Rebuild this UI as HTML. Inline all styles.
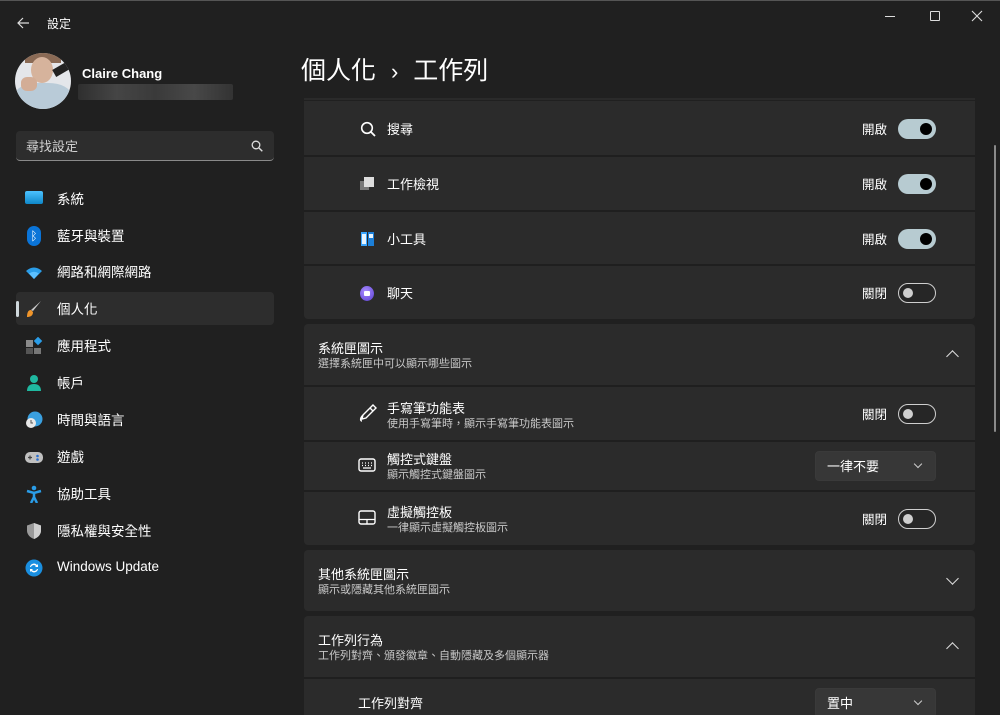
<!DOCTYPE html>
<html><head><meta charset="utf-8">
<style>
*{margin:0;padding:0;box-sizing:border-box}
html,body{width:1000px;height:715px;overflow:hidden}
body{background:#202020;font-family:"Liberation Sans","Noto Sans CJK TC",sans-serif;color:#fff;position:relative}
.a{position:absolute}
.t{font-size:13px;color:#fff;white-space:nowrap}
.s{font-size:11px;color:#c8c8c8;white-space:nowrap}
.nav{position:absolute;left:57px;font-size:13.5px;color:#fff}
.ic{position:absolute;left:25px;width:18px;height:18px}
.card{position:absolute;left:304px;width:671px;background:#2b2b2b;border-radius:4px}
.sep{position:absolute;left:304px;width:671px;height:2px;background:#1f1f1f}
.tg{position:absolute;left:898px;width:38px;height:20px;border-radius:10px}
.on{background:#b7cbd1}
.on::after{content:"";position:absolute;right:4px;top:4px;width:12px;height:12px;border-radius:50%;background:#000}
.off{border:1px solid #cfcfcf;background:#262626}
.off::after{content:"";position:absolute;left:4px;top:4px;width:10px;height:10px;border-radius:50%;background:#cfcfcf}
.lbl{position:absolute;left:862px;font-size:12.5px}
.dd{position:absolute;left:815px;width:121px;height:30px;background:#373737;border-radius:4px;border:1px solid #3a3a3a}
.dd span{position:absolute;left:11px;top:4px;font-size:13px}
.dd i{position:absolute;right:14px;top:9px;width:6px;height:6px;border-right:1.3px solid #ccc;border-bottom:1.3px solid #ccc;transform:rotate(45deg)}
.chev{position:absolute;left:948px;width:9px;height:9px;border-left:1.6px solid #ddd;border-top:1.6px solid #ddd}
</style></head><body>
<div class="a" style="left:0;top:0;width:1000px;height:1px;background:#555"></div>
<svg class="a" style="left:16px;top:16px" width="14" height="14" viewBox="0 0 14 14"><path d="M13 7H2M7 2L2 7l5 5" stroke="#ddd" stroke-width="1.2" fill="none"/></svg>
<div class="a" style="left:47px;top:15px;font-size:12px">設定</div>
<div class="a" style="left:885px;top:16px;width:10px;height:1px;background:#ddd"></div>
<div class="a" style="left:930px;top:11px;width:10px;height:10px;border:1.2px solid #ddd;border-radius:1px"></div>
<svg class="a" style="left:971px;top:10px" width="12" height="12"><path d="M1 1L11 11M11 1L1 11" stroke="#ddd" stroke-width="1.1"/></svg>
<!-- profile -->
<div class="a" style="left:15px;top:53px;width:56px;height:56px;border-radius:50%;background:#e4e6ea;overflow:hidden">
<div class="a" style="left:10px;top:0;width:36px;height:10px;background:#8a6a55"></div>
<div class="a" style="left:16px;top:4px;width:22px;height:26px;border-radius:50%;background:#d6b39c"></div>
<div class="a" style="left:0;top:30px;width:56px;height:30px;border-radius:40% 40% 0 0;background:#b9cbd8"></div>
<div class="a" style="left:6px;top:24px;width:16px;height:14px;border-radius:40%;background:#d3ad96"></div>
<div class="a" style="left:38px;top:12px;width:18px;height:8px;background:#222;transform:rotate(-30deg)"></div>
</div>
<div class="a" style="left:82px;top:66px;font-size:13px;font-weight:bold">Claire Chang</div>
<div class="a" style="left:78px;top:84px;width:155px;height:16px;background:linear-gradient(90deg,#2f2f2f,#454545,#3a3a3a,#484848,#333);border-radius:2px"></div>
<!-- search -->
<div class="a" style="left:16px;top:131px;width:258px;height:30px;background:#2d2d2d;border-radius:4px;border-bottom:1px solid #8a8a8a"></div>
<div class="a" style="left:26px;top:136px;font-size:13px;color:#d0d0d0">尋找設定</div>
<svg class="a" style="left:251px;top:140px" width="12" height="12"><circle cx="5" cy="5" r="3.8" stroke="#ddd" stroke-width="1.3" fill="none"/><path d="M8 8l3.3 3.3" stroke="#ddd" stroke-width="1.4"/></svg>
<!-- nav -->
<div class="a" style="left:16px;top:292px;width:258px;height:33px;background:#2d2d2d;border-radius:4px"></div>
<div class="a" style="left:16px;top:301px;width:3px;height:16px;background:#cfd8dc;border-radius:2px"></div>
<div class="ic" style="top:191px;height:13px;background:linear-gradient(#4cc2ff,#0f88c9);border-radius:2px"></div>
<div class="ic" style="top:226px;left:27px;width:14px;height:20px;background:#0a74d8;border-radius:7px;color:#fff;font-size:12px;text-align:center;line-height:20px">ᛒ</div>
<svg class="ic" style="top:264px" viewBox="0 0 18 18"><path d="M1 7Q9 0 17 7L9 15Z" fill="#2a9de8"/><path d="M4 9.5Q9 6 14 9.5L9 15Z" fill="#5cc0ff"/></svg>
<svg class="ic" style="top:300px" viewBox="0 0 18 18"><path d="M16 1L8 11l-2-1z" fill="#c9c9c9"/><path d="M6 10c-3 0-4 3-4 7 3 0 6-1 6-5z" fill="#f0952a"/></svg>
<svg class="ic" style="top:337px" viewBox="0 0 18 18"><rect x="1" y="3" width="7" height="7" fill="#8a8a8a"/><rect x="1" y="11" width="7" height="6" fill="#555"/><rect x="9" y="11" width="7" height="6" fill="#777"/><rect x="10" y="1" width="6" height="6" fill="#2a9de8" transform="rotate(45 13 4)"/></svg>
<svg class="ic" style="top:374px" viewBox="0 0 18 18"><circle cx="9" cy="5" r="4" fill="#1fb8a0"/><path d="M2 17c0-5 3-7 7-7s7 2 7 7z" fill="#1fb8a0"/></svg>
<svg class="ic" style="top:411px" viewBox="0 0 18 18"><circle cx="10" cy="8" r="7.5" fill="#3aa0e0"/><circle cx="6" cy="12" r="5" fill="#e8e8e8"/><path d="M6 9v3h2" stroke="#555" fill="none"/></svg>
<svg class="ic" style="top:449px" viewBox="0 0 18 18"><rect x="0" y="3" width="18" height="11" rx="5" fill="#c0c0c0"/><circle cx="12.5" cy="7" r="1.3" fill="#2a6fd0"/><circle cx="12.5" cy="10.5" r="1.3" fill="#2a6fd0"/><path d="M3 8.5h4M5 6.5v4" stroke="#444" stroke-width="1.2"/></svg>
<svg class="ic" style="top:485px" viewBox="0 0 18 18"><circle cx="9" cy="3" r="2.3" fill="#2a9de8"/><path d="M2 6l7 2 7-2M9 8v4l-3 6M9 12l3 6" stroke="#2a9de8" stroke-width="2.5" fill="none"/></svg>
<svg class="ic" style="top:522px" viewBox="0 0 18 18"><path d="M9 1L2 3.5v5c0 4 3 7 7 8.5 4-1.5 7-4.5 7-8.5v-5z" fill="#9a9a9a"/><path d="M9 1v16c4-1.5 7-4.5 7-8.5v-5z" fill="#cfcfcf"/></svg>
<svg class="ic" style="top:559px" viewBox="0 0 18 18"><circle cx="9" cy="9" r="8.5" fill="#1a8fe0"/><path d="M5 8a4 4 0 0 1 7-2l1-1v3h-3l1-1a3 3 0 0 0-5 1M13 10a4 4 0 0 1-7 2l-1 1v-3h3l-1 1a3 3 0 0 0 5-1" fill="#fff"/></svg>
<div class="nav" style="top:188px">系統</div>
<div class="nav" style="top:225px">藍牙與裝置</div>
<div class="nav" style="top:261px">網路和網際網路</div>
<div class="nav" style="top:298px">個人化</div>
<div class="nav" style="top:335px">應用程式</div>
<div class="nav" style="top:372px">帳戶</div>
<div class="nav" style="top:409px">時間與語言</div>
<div class="nav" style="top:446px">遊戲</div>
<div class="nav" style="top:483px">協助工具</div>
<div class="nav" style="top:520px">隱私權與安全性</div>
<div class="nav" style="top:559px">Windows Update</div>
<!-- header -->
<div class="a" style="left:301px;top:51px;font-size:25px;color:#fff">個人化 <span style="font-size:22px;padding:0 8px">›</span> 工作列</div>
<div class="a" style="left:304px;top:98px;width:671px;height:2px;background:#2a2a2a"></div>
<div class="a" style="left:994px;top:145px;width:2px;height:287px;background:#8a8a8a;border-radius:1px"></div>
<!-- card 1 -->
<div class="card" style="top:101px;height:218px;border-radius:0 0 4px 4px"></div>
<div class="sep" style="top:155px"></div>
<div class="sep" style="top:210px"></div>
<div class="sep" style="top:264px"></div>
<svg class="a" style="left:360px;top:121px" width="16" height="16"><circle cx="7" cy="7" r="5.3" stroke="#fff" stroke-width="1.6" fill="none"/><path d="M11 11l4 4" stroke="#fff" stroke-width="1.8"/></svg>
<div class="a" style="left:360px;top:177px;width:14px;height:14px"><div class="a" style="left:0;top:4px;width:9px;height:9px;background:#777"></div><div class="a" style="left:4px;top:0;width:10px;height:10px;background:#ddd"></div></div>
<div class="a" style="left:361px;top:232px;width:13px;height:14px"><div class="a" style="left:0;top:0;width:6px;height:14px;background:#3aa6ff"></div><div class="a" style="left:7px;top:0;width:6px;height:14px;background:#1c7fd8"></div><div class="a" style="left:1px;top:2px;width:4px;height:10px;background:#e6f4ff"></div><div class="a" style="left:8px;top:2px;width:4px;height:4px;background:#e6f4ff"></div></div>
<div class="a" style="left:360px;top:286px;width:14px;height:15px;border-radius:50%;background:radial-gradient(circle at 40% 35%,#a88bff,#5a3fd0)"><div class="a" style="left:4px;top:5px;width:6px;height:5px;background:#fff;border-radius:1px"></div></div>
<div class="t a" style="left:387px;top:119px">搜尋</div>
<div class="t a" style="left:387px;top:174px">工作檢視</div>
<div class="t a" style="left:387px;top:229px">小工具</div>
<div class="t a" style="left:387px;top:283px">聊天</div>
<div class="lbl" style="top:119px">開啟</div><div class="tg on" style="top:119px"></div>
<div class="lbl" style="top:174px">開啟</div><div class="tg on" style="top:174px"></div>
<div class="lbl" style="top:229px">開啟</div><div class="tg on" style="top:229px"></div>
<div class="lbl" style="top:283px">關閉</div><div class="tg off" style="top:283px"></div>
<!-- card 2 -->
<div class="card" style="top:324px;height:221px"></div>
<div class="sep" style="top:385px"></div>
<div class="sep" style="top:440px"></div>
<div class="sep" style="top:490px"></div>
<div class="t a" style="left:318px;top:338px">系統匣圖示</div>
<div class="s a" style="left:318px;top:355px">選擇系統匣中可以顯示哪些圖示</div>
<div class="chev" style="top:352px;transform:rotate(45deg)"></div>
<svg class="a" style="left:359px;top:403px" width="18" height="20" viewBox="0 0 18 20"><path d="M14 2l3 3L7 15l-4 1 1-4zM4 12c-3 3-3 6-1 6M11 5l3 3" stroke="#fff" stroke-width="1.4" fill="none"/></svg>
<svg class="a" style="left:358px;top:458px" width="18" height="14"><rect x="1" y="1" width="16" height="12" rx="2" stroke="#fff" stroke-width="1.4" fill="none"/><path d="M4 5h1M7 5h1M10 5h1M13 5h1M4 7.5h1M7 7.5h1M10 7.5h1M13 7.5h1M5 10h8" stroke="#fff" stroke-width="1.2"/></svg>
<svg class="a" style="left:358px;top:510px" width="18" height="15"><rect x="1" y="1" width="16" height="13" rx="2" stroke="#fff" stroke-width="1.4" fill="none"/><path d="M1 9.5h16M9 9.5v4" stroke="#fff" stroke-width="1.3"/></svg>
<div class="t a" style="left:387px;top:398px">手寫筆功能表</div>
<div class="s a" style="left:387px;top:415px">使用手寫筆時，顯示手寫筆功能表圖示</div>
<div class="t a" style="left:387px;top:449px">觸控式鍵盤</div>
<div class="s a" style="left:387px;top:466px">顯示觸控式鍵盤圖示</div>
<div class="t a" style="left:387px;top:502px">虛擬觸控板</div>
<div class="s a" style="left:387px;top:519px">一律顯示虛擬觸控板圖示</div>
<div class="lbl" style="top:404px">關閉</div><div class="tg off" style="top:404px"></div>
<div class="dd" style="top:451px"><span>一律不要</span><i></i></div>
<div class="lbl" style="top:509px">關閉</div><div class="tg off" style="top:509px"></div>
<!-- card 3 -->
<div class="card" style="top:550px;height:61px"></div>
<div class="t a" style="left:318px;top:564px">其他系統匣圖示</div>
<div class="s a" style="left:318px;top:581px">顯示或隱藏其他系統匣圖示</div>
<div class="chev" style="top:574px;transform:rotate(225deg)"></div>
<!-- card 4 -->
<div class="card" style="top:616px;height:99px;border-radius:4px 4px 0 0"></div>
<div class="sep" style="top:677px"></div>
<div class="t a" style="left:318px;top:630px">工作列行為</div>
<div class="s a" style="left:318px;top:647px">工作列對齊、頒發徽章、自動隱藏及多個顯示器</div>
<div class="chev" style="top:644px;transform:rotate(45deg)"></div>
<div class="t a" style="left:358px;top:693px">工作列對齊</div>
<div class="dd" style="top:688px"><span>置中</span><i></i></div>
</body></html>
